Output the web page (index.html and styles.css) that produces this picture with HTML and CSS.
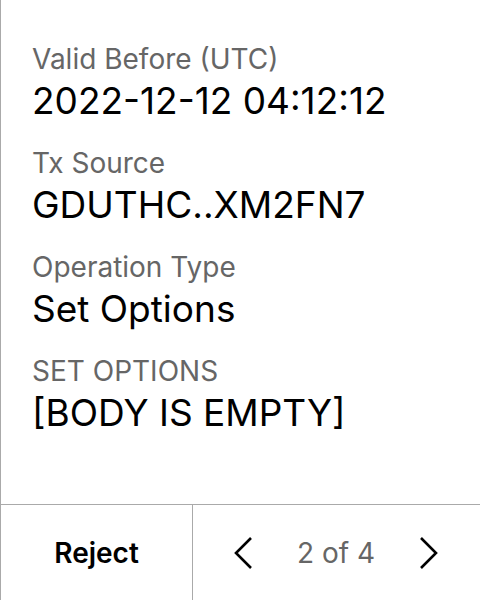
FILE: index.html
```html
<!DOCTYPE html>
<html>
<head>
<meta charset="utf-8">
<link rel="stylesheet" href="styles.css">
</head>
<body>
<div class="screen">
  <div class="content">
    <div class="field">
      <div class="label">Valid Before (UTC)</div>
      <div class="value">2022-12-12 04:12:12</div>
    </div>
    <div class="field">
      <div class="label">Tx Source</div>
      <div class="value">GDUTHC..XM2FN7</div>
    </div>
    <div class="field">
      <div class="label">Operation Type</div>
      <div class="value">Set Options</div>
    </div>
    <div class="field">
      <div class="label">SET OPTIONS</div>
      <div class="value">[BODY IS EMPTY]</div>
    </div>
  </div>
  <div class="footer">
    <div class="reject">Reject</div>
    <div class="pager">
      <svg class="chev" width="20" height="34" viewBox="0 0 20 34"><path d="M18 2 L3 17 L18 32" fill="none" stroke="#000" stroke-width="2.6"/></svg>
      <span class="count">2 of 4</span>
      <svg class="chev" width="20" height="34" viewBox="0 0 20 34"><path d="M2 2 L17 17 L2 32" fill="none" stroke="#000" stroke-width="2.6"/></svg>
    </div>
  </div>
</div>
</body>
</html>
```
FILE: styles.css
```css
html, body {
  margin: 0;
  padding: 0;
  background: #fff;
}
body {
  font-family: Inter, "Noto Sans", sans-serif;
  color: #000;
}
.screen {
  width: 480px;
  height: 600px;
  box-sizing: border-box;
  border-left: 1px solid #aaa;
  display: flex;
  flex-direction: column;
}
.content {
  flex: 1;
  padding: 39px 0 0 31px;
  display: flex;
  flex-direction: column;
  gap: 20px;
}
.label {
  font-size: 28px;
  line-height: 40px;
  color: #666;
}
.value {
  font-size: 37px;
  line-height: 44px;
  color: #000;
}
.footer {
  height: 96px;
  box-sizing: border-box;
  border-top: 1px solid #aaa;
  display: flex;
}
.reject {
  width: 192px;
  box-sizing: border-box;
  border-right: 1px solid #aaa;
  display: flex;
  align-items: center;
  justify-content: center;
  font-weight: 600;
  font-size: 28px;
}
.pager {
  flex: 1;
  display: flex;
  align-items: center;
  justify-content: space-between;
  padding: 0 41px 0 40px;
}
.count {
  font-size: 28px;
  color: #666;
}
.chev { display: block; }
```
